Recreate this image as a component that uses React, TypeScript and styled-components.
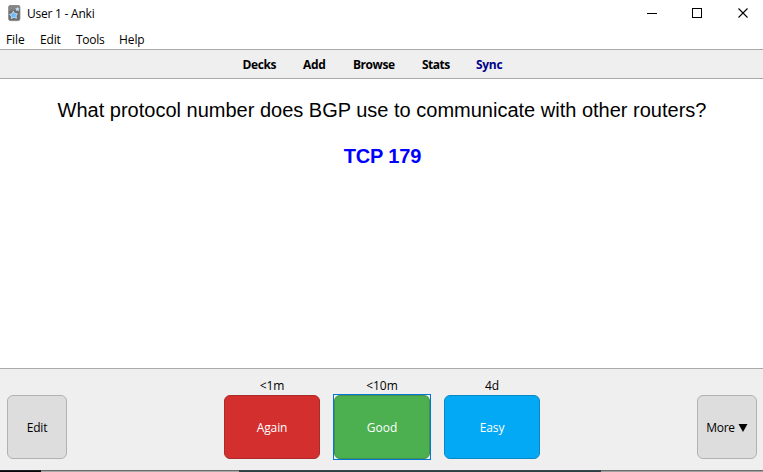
import React from "react";
import styled, { createGlobalStyle } from "styled-components";

const Global = createGlobalStyle`
  * { box-sizing: border-box; }
  body { margin: 0; background: #fff; overflow: hidden; }
`;

const Window = styled.div`
  width: 763px;
  height: 472px;
  display: flex;
  flex-direction: column;
  background: #fff;
  color: #000;
  font: 12px/16px "Open Sans", "Noto Sans", sans-serif;
  white-space: nowrap;
`;

const TitleBar = styled.header`
  height: 29px;
  flex: none;
  display: flex;
  align-items: flex-start;
  padding: 5px 0 0 8px;
`;

const Title = styled.div`
  margin-left: 5px;
  padding-top: 1px;
  letter-spacing: -0.23px;
  flex: 1;
`;

const Controls = styled.div`
  display: flex;
  padding: 2px 14px 0 0;
  gap: 34px;
`;

const MenuBar = styled.nav`
  height: 20px;
  flex: none;
  display: flex;
  padding: 3px 0 0 6px;
`;

const MenuItem = styled.span<{ $w: number; $track: number }>`
  width: ${(p) => p.$w}px;
  letter-spacing: ${(p) => p.$track}px;
`;

const Toolbar = styled.nav`
  height: 30px;
  flex: none;
  display: flex;
  padding: 7px 0 0 242.5px;
  background: #efefef;
  border-top: 1px solid #a9a9a9;
  border-bottom: 1px solid #a9a9a9;
  font-weight: 700;
`;

const ToolLink = styled.span<{ $w: number; $track: number; $color?: string }>`
  width: ${(p) => p.$w}px;
  letter-spacing: ${(p) => p.$track}px;
  color: ${(p) => p.$color ?? "#000"};
`;

const Card = styled.main`
  flex: 1;
  padding: 20px 0 0 1px;
  text-align: center;
  font: 20px/23px "Liberation Sans", Arial, sans-serif;
`;

const Question = styled.div``;

const Answer = styled.div`
  margin: 23px 0 0 1px;
  font-weight: 700;
  letter-spacing: -0.15px;
  color: #00f;
`;

const Footer = styled.footer`
  height: 102px;
  flex: none;
  display: flex;
  justify-content: space-between;
  align-items: flex-end;
  padding: 0 6px 11px 7px;
  background: #efefef;
  border-top: 1px solid #a9a9a9;
`;

const Answers = styled.div`
  display: flex;
  gap: 14px;
`;

const Choice = styled.div`
  width: 96px;
  text-align: center;
`;

const Interval = styled.div`
  height: 17px;
  letter-spacing: -0.1px;
`;

const Button = styled.button<{ $w: number; $bg: string; $edge: string; $fg?: string; $track?: number }>`
  display: block;
  width: ${(p) => p.$w}px;
  height: 64px;
  padding: 1px 0 0;
  border: 1px solid ${(p) => p.$edge};
  border-radius: 6px;
  background: ${(p) => p.$bg};
  color: ${(p) => p.$fg ?? "#000"};
  font: inherit;
  letter-spacing: ${(p) => p.$track ?? 0}px;
`;

const FocusFrame = styled.div`
  margin: -1px;
  border: 1px solid #0078d7;
`;

const Arrow = styled.svg`
  margin-left: 3px;
`;

const Strip = styled.div`
  height: 2px;
  flex: none;
  display: grid;
  grid-template-columns: 41px 198px 362px 1fr;
`;

const StripPart = styled.div<{ $top: string; $bottom: string }>`
  border-top: 1px solid ${(p) => p.$top};
  background: ${(p) => p.$bottom};
`;

const AppIcon = () => (
  <svg width="14" height="17" viewBox="0 0 14 17">
    <rect x="0.5" y="0.3" width="11.5" height="15.4" rx="2" fill="#6e6e6e" stroke="#8a8a8a" strokeWidth="0.7" />
    <path d="M1 6 Q6 6 12 3 V1 H1Z" fill="#858585" />
    <path d="M5.3 6.2 6.8 8.6 9.4 8.8 8 11 8.6 13.2 5.8 12.4 3.4 13.6 3.4 11.2 1.6 9.4 4.2 8.6Z" fill="#6ebcf6" stroke="#d8efff" strokeWidth="0.7" />
    <path d="M9.2 2 10 3.2 11.6 3.2 10.7 4.5 11 6 9.5 5.4 8.2 6 8.2 4.5 7.2 3.6 8.7 3.2Z" fill="#c2e2f7" />
  </svg>
);

export default function App() {
  return (
    <>
      <Global />
      <Window>
        <TitleBar>
          <AppIcon />
          <Title>User 1 - Anki</Title>
          <Controls>
            <svg width="12" height="12" shapeRendering="crispEdges"><path d="M1 6.5H11" stroke="#000" /></svg>
            <svg width="12" height="12" shapeRendering="crispEdges"><rect x="0.5" y="1.5" width="9" height="9" fill="none" stroke="#000" /></svg>
            <svg width="11" height="12"><path d="M0.5 1.5 9.5 10.5M9.5 1.5 0.5 10.5" stroke="#000" strokeWidth="1.1" /></svg>
          </Controls>
        </TitleBar>
        <MenuBar>
          <MenuItem $w={34} $track={-0.1}>File</MenuItem>
          <MenuItem $w={36} $track={-0.15}>Edit</MenuItem>
          <MenuItem $w={43} $track={-0.3}>Tools</MenuItem>
          <MenuItem $w={40} $track={-0.1}>Help</MenuItem>
        </MenuBar>
        <Toolbar>
          <ToolLink $w={60.5} $track={-0.4}>Decks</ToolLink>
          <ToolLink $w={50} $track={-0.3}>Add</ToolLink>
          <ToolLink $w={69} $track={-0.45}>Browse</ToolLink>
          <ToolLink $w={54} $track={-0.5}>Stats</ToolLink>
          <ToolLink $w={40} $track={-0.3} $color="#00008b">Sync</ToolLink>
        </Toolbar>
        <Card>
          <Question>What protocol number does BGP use to communicate with other routers?</Question>
          <Answer>TCP 179</Answer>
        </Card>
        <Footer>
          <Button $w={60} $bg="#ddd" $edge="#b2b2b2" $track={-0.2}>Edit</Button>
          <Answers>
            <Choice>
              <Interval>&lt;1m</Interval>
              <Button $w={96} $bg="#d32f2f" $edge="#ab2b2b" $fg="#fff" $track={-0.1}>Again</Button>
            </Choice>
            <Choice>
              <Interval>&lt;10m</Interval>
              <FocusFrame>
                <Button $w={96} $bg="#4caf50" $edge="#43904a" $fg="#fff">Good</Button>
              </FocusFrame>
            </Choice>
            <Choice>
              <Interval>4d</Interval>
              <Button $w={96} $bg="#03a9f4" $edge="#0b88c4" $fg="#fff" $track={-0.1}>Easy</Button>
            </Choice>
          </Answers>
          <Button $w={60} $bg="#ddd" $edge="#b2b2b2" $track={-0.25}>
            More
            <Arrow width="10" height="8"><path d="M0.5 0H9.5L5 8Z" /></Arrow>
          </Button>
        </Footer>
        <Strip>
          <StripPart $top="#1c1e22" $bottom="#08090c" />
          <StripPart $top="#6c6c6c" $bottom="#a8a8a8" />
          <StripPart $top="#34474b" $bottom="#2d4146" />
          <StripPart $top="#6c6c6c" $bottom="#a0a0a0" />
        </Strip>
      </Window>
    </>
  );
}
